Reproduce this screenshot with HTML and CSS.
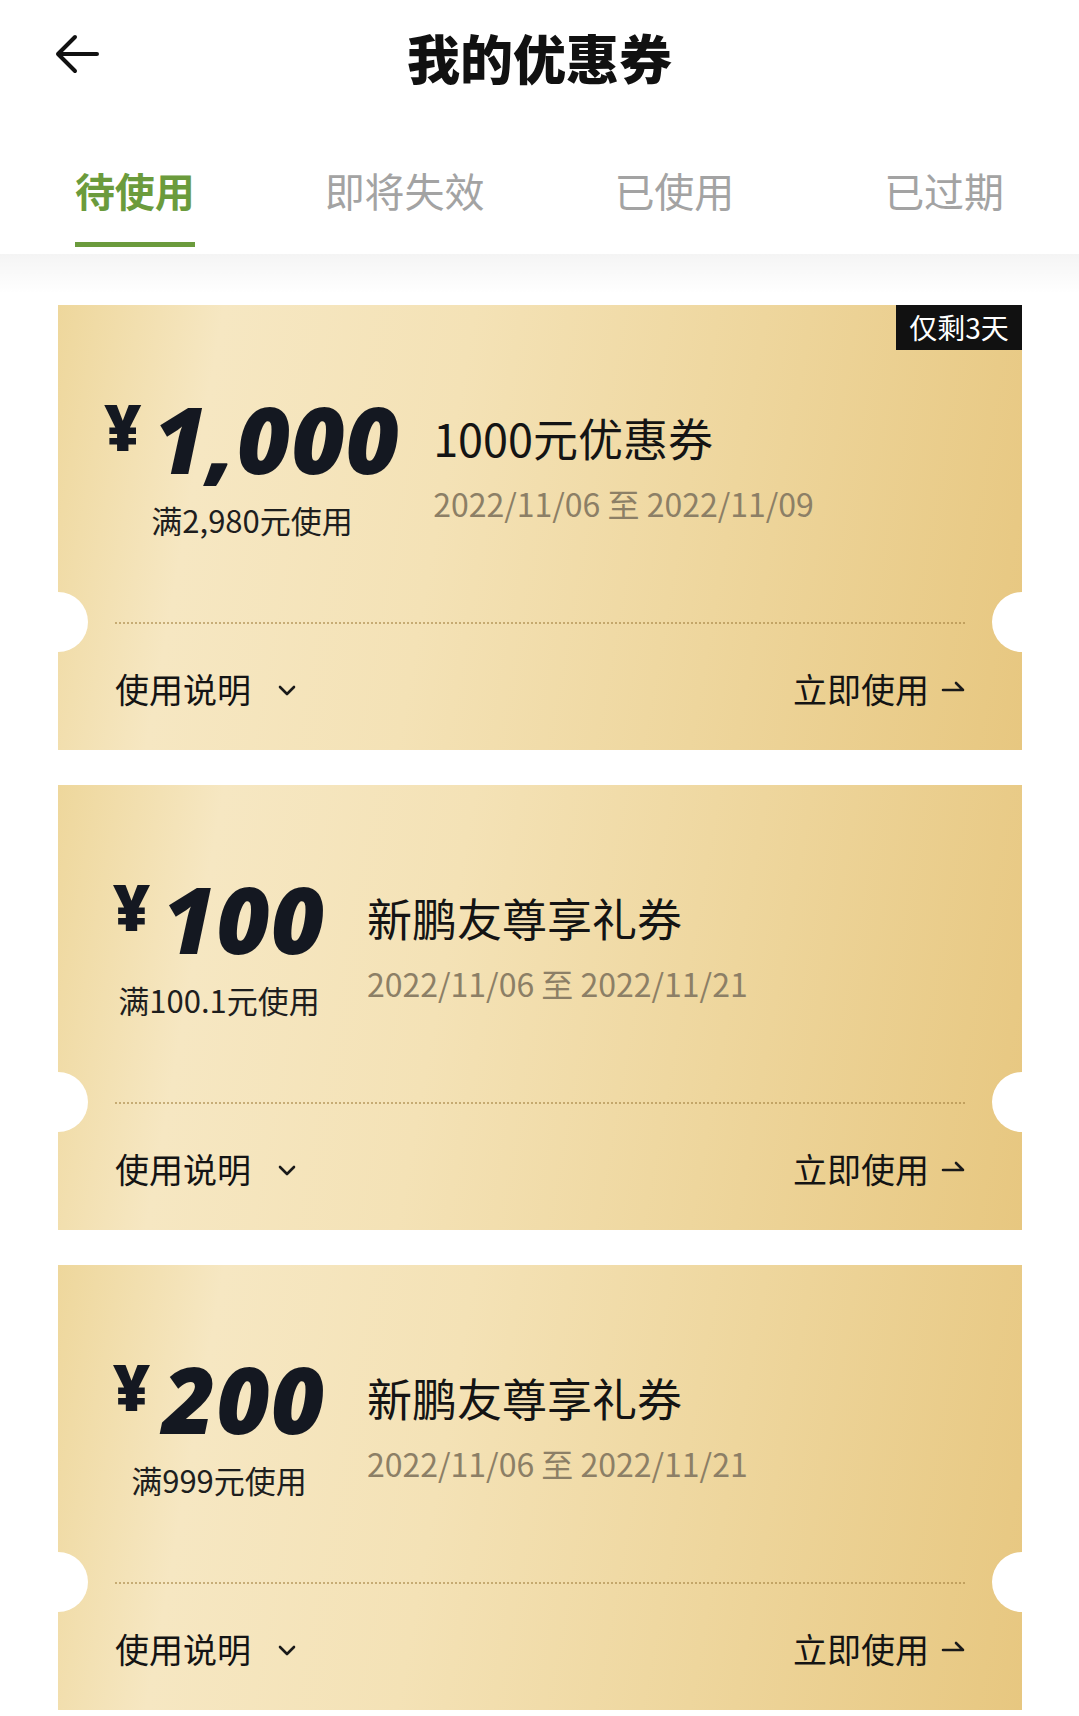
FILE: index.html
```html
<!DOCTYPE html>
<html lang="zh-CN">
<head>
<meta charset="utf-8">
<title>我的优惠券</title>
<link rel="stylesheet" href="styles.css">
</head>
<body>
<header class="topbar">
  <div class="back">
    <svg width="48" height="40" viewBox="0 0 48 40"><path d="M44 20H5M22 3L5 20l17 17" fill="none" stroke="#111" stroke-width="4" stroke-linecap="round" stroke-linejoin="round"/></svg>
  </div>
  <h1 class="title">我的优惠券</h1>
  <div></div>
</header>
<nav class="tabs">
  <div class="tab active"><span class="tab-label">待使用<i class="bar"></i></span></div>
  <div class="tab"><span class="tab-label">即将失效</span></div>
  <div class="tab"><span class="tab-label">已使用</span></div>
  <div class="tab"><span class="tab-label">已过期</span></div>
</nav>
<main class="list">
  <section class="card">
    <span class="badge">仅剩3天</span>
    <div class="card-top">
      <div class="amount-block">
        <div class="amount"><span class="yen">¥</span><span class="num">1,000</span></div>
        <div class="cond">满2,980元使用</div>
      </div>
      <div class="info">
        <div class="name">1000元优惠券</div>
        <div class="date">2022/11/06 至 2022/11/09</div>
      </div>
    </div>
    <div class="divider"></div>
    <div class="card-bottom">
      <div class="link">使用说明<svg class="chev" width="18" height="12" viewBox="0 0 18 12"><path d="M2 2l7 7 7-7" fill="none" stroke="#1a1a1a" stroke-width="2.6" stroke-linecap="round" stroke-linejoin="round"/></svg></div>
      <div class="link">立即使用<svg class="harp" width="24" height="14" viewBox="0 0 24 14"><path d="M2 11H22L15 4" fill="none" stroke="#1a1a1a" stroke-width="2.6" stroke-linecap="round" stroke-linejoin="round"/></svg></div>
    </div>
  </section>
  <section class="card">
    <div class="card-top">
      <div class="amount-block">
        <div class="amount"><span class="yen">¥</span><span class="num">100</span></div>
        <div class="cond">满100.1元使用</div>
      </div>
      <div class="info">
        <div class="name">新鹏友尊享礼券</div>
        <div class="date">2022/11/06 至 2022/11/21</div>
      </div>
    </div>
    <div class="divider"></div>
    <div class="card-bottom">
      <div class="link">使用说明<svg class="chev" width="18" height="12" viewBox="0 0 18 12"><path d="M2 2l7 7 7-7" fill="none" stroke="#1a1a1a" stroke-width="2.6" stroke-linecap="round" stroke-linejoin="round"/></svg></div>
      <div class="link">立即使用<svg class="harp" width="24" height="14" viewBox="0 0 24 14"><path d="M2 11H22L15 4" fill="none" stroke="#1a1a1a" stroke-width="2.6" stroke-linecap="round" stroke-linejoin="round"/></svg></div>
    </div>
  </section>
  <section class="card">
    <div class="card-top">
      <div class="amount-block">
        <div class="amount"><span class="yen">¥</span><span class="num">200</span></div>
        <div class="cond">满999元使用</div>
      </div>
      <div class="info">
        <div class="name">新鹏友尊享礼券</div>
        <div class="date">2022/11/06 至 2022/11/21</div>
      </div>
    </div>
    <div class="divider"></div>
    <div class="card-bottom">
      <div class="link">使用说明<svg class="chev" width="18" height="12" viewBox="0 0 18 12"><path d="M2 2l7 7 7-7" fill="none" stroke="#1a1a1a" stroke-width="2.6" stroke-linecap="round" stroke-linejoin="round"/></svg></div>
      <div class="link">立即使用<svg class="harp" width="24" height="14" viewBox="0 0 24 14"><path d="M2 11H22L15 4" fill="none" stroke="#1a1a1a" stroke-width="2.6" stroke-linecap="round" stroke-linejoin="round"/></svg></div>
    </div>
  </section>
</main>
</body>
</html>
```
FILE: styles.css
```css
* { box-sizing: border-box; }
html, body {
  margin: 0;
  padding: 0;
  background: #fff;
  font-family: "Noto Sans", "Noto Sans CJK SC", sans-serif;
  color: #1a1a1a;
}
body { overflow: hidden; }

.topbar {
  height: 114px;
  display: grid;
  grid-template-columns: 1fr auto 1fr;
  align-items: center;
}
.back {
  padding-left: 53px;
  display: flex;
  align-items: center;
  height: 40px;
  margin-top: -6px;
}
.title {
  margin: 0;
  font-family: "Noto Sans CJK SC", sans-serif;
  font-size: 53px;
  font-weight: 900;
  color: #111;
  line-height: 1;
}

.tabs {
  position: relative;
  z-index: 1;
  display: flex;
  height: 140px;
  background: #fff;
}
.tabs::after {
  content: "";
  position: absolute;
  left: 0;
  right: 0;
  top: 100%;
  height: 40px;
  background: linear-gradient(to bottom, rgba(0, 0, 0, 0.045), rgba(0, 0, 0, 0));
}
.tab {
  flex: 1;
  display: flex;
  justify-content: center;
  padding-top: 52px;
}
.tab-label {
  position: relative;
  display: inline-flex;
  flex-direction: column;
  align-items: stretch;
  font-family: "Noto Sans CJK SC", sans-serif;
  font-size: 40px;
  line-height: 48px;
  color: #a3a3a3;
}
.tab.active .tab-label {
  color: #6b9b3c;
  font-weight: 700;
}
.bar {
  display: block;
  height: 5px;
  margin-top: 28px;
  background: #6b9b3c;
}

.list {
  display: flex;
  flex-direction: column;
  gap: 35px;
  padding: 51px 57px 0 58px;
}

.card {
  position: relative;
  height: 445px;
  background: linear-gradient(100deg, #eed79c 0%, #f6e7c2 16%, #f4e2b6 40%, #eed69d 68%, #e7c780 100%);
}
.card::before,
.card::after {
  content: "";
  position: absolute;
  top: 287px;
  width: 60px;
  height: 60px;
  border-radius: 50%;
  background: #fff;
}
.card::before { left: -30px; }
.card::after { right: -30px; }

.badge {
  position: absolute;
  top: 0;
  right: 0;
  width: 126px;
  height: 45px;
  background: #111;
  color: #fff;
  font-family: "Noto Sans CJK SC", sans-serif;
  font-size: 28px;
  line-height: 45px;
  text-align: center;
}

.card-top {
  height: 317px;
  display: flex;
  align-items: flex-start;
  padding: 71px 57px 0 46px;
}
.amount-block {
  min-width: 230px;
  display: flex;
  flex-direction: column;
  align-items: center;
}
.amount {
  display: flex;
  align-items: flex-start;
  color: #141821;
}
.yen {
  font-family: "Open Sans", "Noto Sans", sans-serif;
  font-weight: 800;
  font-size: 64px;
  line-height: 64px;
  margin-top: 19px;
  margin-right: 12px;
}
.num {
  font-family: "Open Sans", "Noto Sans", sans-serif;
  font-weight: 800;
  font-style: italic;
  font-size: 92px;
  line-height: 125px;
  letter-spacing: 1px;
}
.cond {
  margin-top: 0;
  font-family: "Noto Sans CJK SC", sans-serif;
  font-size: 31px;
  line-height: 38px;
  color: #1e1e1e;
}
.info {
  margin-left: 33px;
  padding-top: 35px;
}
.name {
  font-family: "Noto Sans CJK SC", sans-serif;
  font-size: 45px;
  line-height: 54px;
  color: #141414;
}
.date {
  margin-top: 18px;
  font-family: "Noto Sans CJK SC", sans-serif;
  font-size: 32px;
  line-height: 40px;
  color: #8c7f66;
}

.divider {
  margin: 0 57px;
  border-top: 2px dotted rgba(160, 125, 60, 0.55);
}

.card-bottom {
  height: 126px;
  display: flex;
  justify-content: space-between;
  align-items: center;
  padding: 4px 57px 0 57px;
}
.link {
  display: flex;
  align-items: center;
  font-family: "Noto Sans CJK SC", sans-serif;
  font-size: 34px;
  line-height: 40px;
  color: #141414;
}
.chev { margin-left: 27px; margin-top: 4px; }
.harp { margin-left: 12px; margin-top: -6px; }
```
